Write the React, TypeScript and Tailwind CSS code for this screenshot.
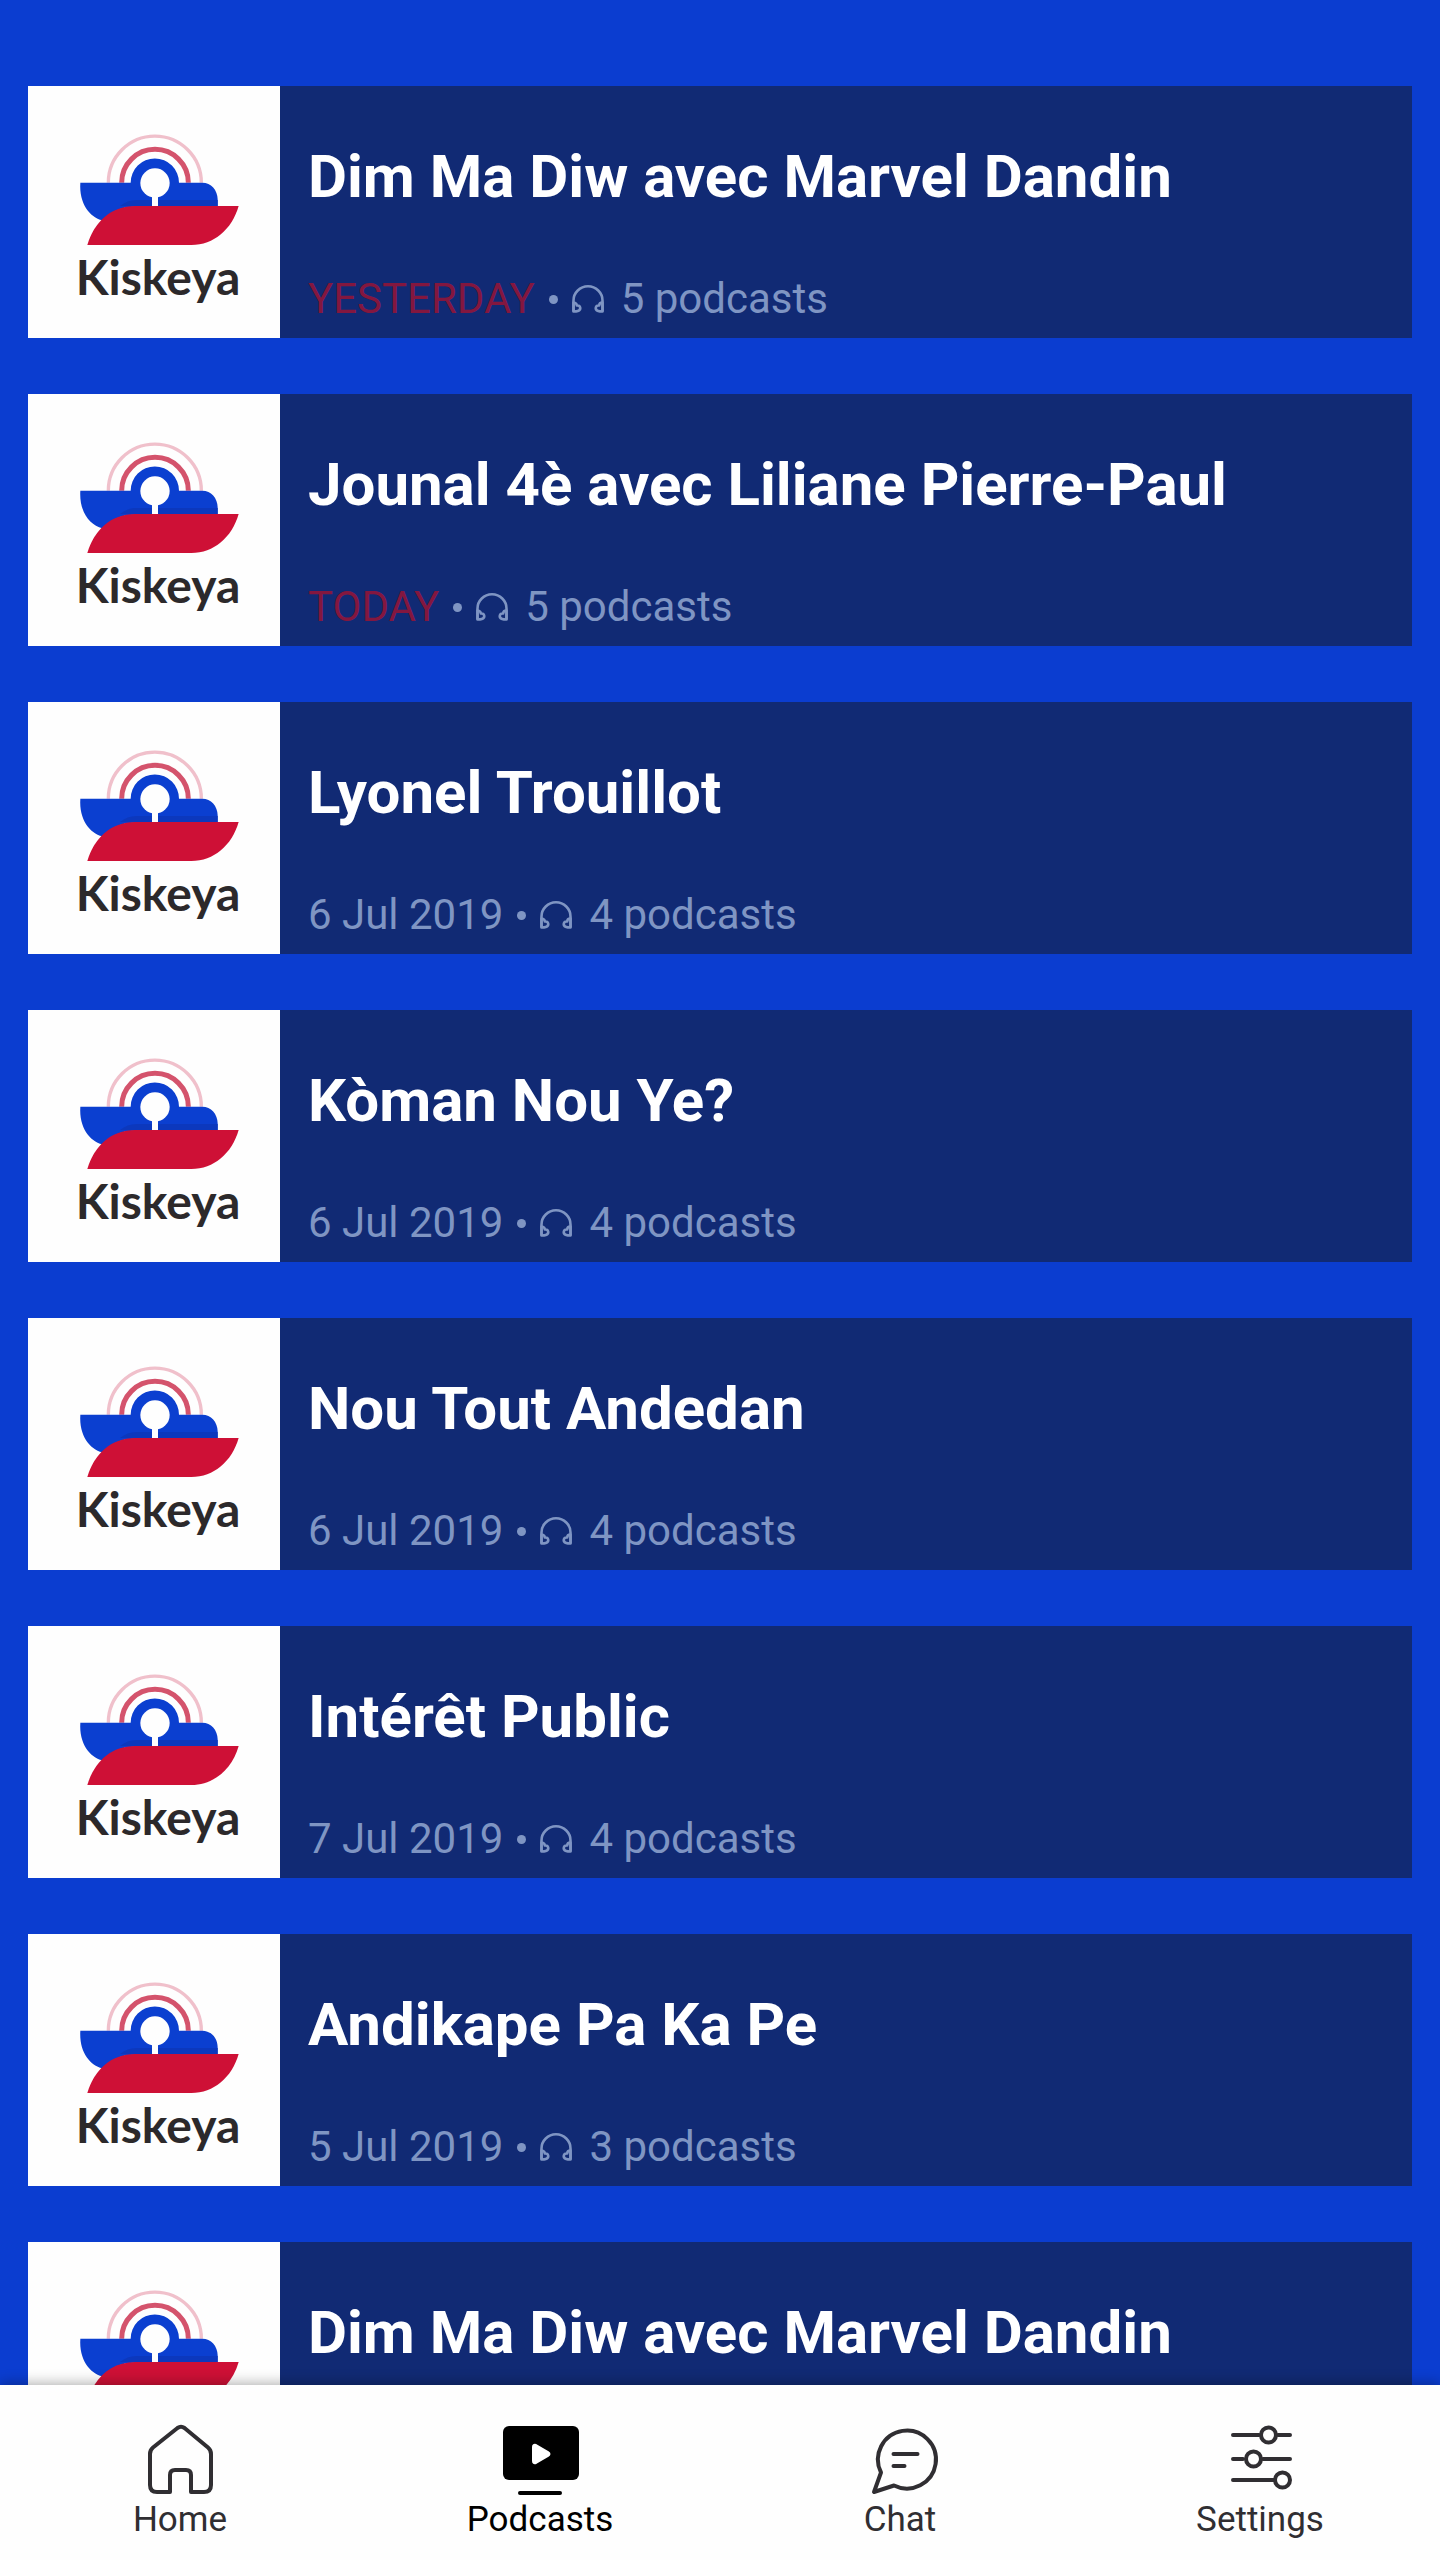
import type { ReactNode } from 'react';

type Podcast = {
  title: string;
  date?: string;
  count?: number;
  recent?: boolean;
};

const PODCASTS: Podcast[] = [
  { title: 'Dim Ma Diw avec Marvel Dandin', date: 'YESTERDAY', count: 5, recent: true },
  { title: 'Jounal 4è avec Liliane Pierre-Paul', date: 'TODAY', count: 5, recent: true },
  { title: 'Lyonel Trouillot', date: '6 Jul 2019', count: 4 },
  { title: 'Kòman Nou Ye?', date: '6 Jul 2019', count: 4 },
  { title: 'Nou Tout Andedan', date: '6 Jul 2019', count: 4 },
  { title: 'Intérêt Public', date: '7 Jul 2019', count: 4 },
  { title: 'Andikape Pa Ka Pe', date: '5 Jul 2019', count: 3 },
  { title: 'Dim Ma Diw avec Marvel Dandin' },
];

function KiskeyaLogo() {
  return (
    <div className="relative size-[252px] shrink-0 bg-[#fefefe]">
      <svg viewBox="24 18 756 756" className="size-full" fill="none" aria-hidden="true">
        <path d="M265 308a139 139 0 0 1 279 0" stroke="#f0c0cb" strokeWidth="10" />
        <path d="M305 308a99 99 0 0 1 200 0" stroke="#d4536c" strokeWidth="15" />
        <path
          d="M182 308h150a72 72 0 0 1 145 0h70c26 0 46 22 46 50v22H345c-42 0-70 14-98 41-38-10-70-50-66-113Z"
          fill="#0b3fd0"
        />
        <path d="M300 378c15-12 30-18 50-18h243v18Z" fill="#0c38bd" />
        <circle cx="405" cy="309" r="44" fill="#fefefe" />
        <path d="M396 340h18v40h-18z" fill="#fefefe" />
        <path d="M202 495c20-68 70-117 143-117h311c-20 70-75 117-142 117Z" fill="#ce1036" />
      </svg>
      <span className="absolute inset-x-0 top-[163px] pl-2 text-center font-['Lato'] text-[48px] leading-[56px] font-bold text-[#2c292b]">
        Kiskeya
      </span>
    </div>
  );
}

function HeadphonesIcon() {
  return (
    <svg viewBox="0 0 32 28" className="h-7 w-8" fill="none" stroke="currentColor" strokeWidth="2.600" strokeLinejoin="round" aria-hidden="true">
      <path d="M1.500 26.500V15.500a14.500 14.200 0 0 1 29 0v11" />
      <path d="M1.500 26.500V17.500c2.500 0 3.300 1.800 3.300 3 3.700-.5 5 4 1 5.500q-1.300.5-4.300.5Z" />
      <path d="M30.500 26.500V17.500c-2.500 0-3.300 1.800-3.300 3-3.700-.5-5 4-1 5.500q1.300.5 4.300.5Z" />
    </svg>
  );
}

function PodcastCard({ title, date, count, recent }: Podcast) {
  return (
    <li>
      <a href="#" className="flex bg-[#112a74]">
        <KiskeyaLogo />
        <div className="flex min-w-0 flex-1 flex-col justify-between pt-[53px] pb-3.5 pl-7">
          <h2 className="truncate text-[60px] leading-[76px] font-bold text-white">{title}</h2>
          {date && (
            <p className="flex items-center text-[42px] leading-[50px] text-[#7f95c3]">
              <span className={recent ? 'text-[#83173f]' : ''}>{date}</span>
              <span className="mx-3.5 size-[9px] rounded-full bg-current" />
              <HeadphonesIcon />
              <span className="ml-[17px]">{count} podcasts</span>
            </p>
          )}
        </div>
      </a>
    </li>
  );
}

function HomeIcon() {
  return (
    <svg viewBox="0 0 80 72" className="h-[72px] w-20" fill="none" stroke="currentColor" strokeWidth="4" strokeLinejoin="round" strokeLinecap="round" aria-hidden="true">
      <path d="M30 69V52q0-5 5-5h11q5 0 5 5v17h13q7 0 7-7V31q0-4-3-6.500L44.500 5Q41 2.500 37.500 5L13 24.500q-3 2.500-3 6.500v31q0 7 7 7h13Z" />
    </svg>
  );
}

function PodcastsIcon() {
  return (
    <svg viewBox="0 0 80 72" className="h-[72px] w-20" aria-hidden="true">
      <rect x="3" y="3" width="76" height="54" rx="6" fill="currentColor" />
      <rect x="18" y="68" width="44" height="4" rx="2" fill="currentColor" />
      <path d="M33 24v14q0 3 3 2l12-7q3-2 0-4l-12-7q-3-1-3 2Z" fill="#fff" stroke="#fff" strokeWidth="2" strokeLinejoin="round" />
    </svg>
  );
}

function ChatIcon() {
  return (
    <svg viewBox="0 0 80 72" className="h-[72px] w-20" fill="none" stroke="currentColor" strokeWidth="4" strokeLinejoin="round" strokeLinecap="round" aria-hidden="true">
      <path d="M34 62.500a29 29 0 1 0-13-13L14 69Z" />
      <path d="M33.500 31h24M33.500 43h11" />
    </svg>
  );
}

function SettingsIcon() {
  return (
    <svg viewBox="0 0 80 72" className="h-[72px] w-20" fill="none" stroke="currentColor" strokeWidth="4" strokeLinecap="round" aria-hidden="true">
      <path d="M13 12h26M58 12h12M13 36h10M43 36h27M13 57h42" />
      <circle cx="48.500" cy="12" r="7.500" />
      <circle cx="33.500" cy="36" r="7.500" />
      <circle cx="62.500" cy="57" r="7.500" />
    </svg>
  );
}

const TABS: { label: string; icon: ReactNode; active?: boolean }[] = [
  { label: 'Home', icon: <HomeIcon /> },
  { label: 'Podcasts', icon: <PodcastsIcon />, active: true },
  { label: 'Chat', icon: <ChatIcon /> },
  { label: 'Settings', icon: <SettingsIcon /> },
];

export default function App() {
  return (
    <div className="flex h-screen flex-col bg-[#0b3dd0] font-['Roboto',sans-serif]">
      <main className="min-h-0 flex-1 overflow-y-auto px-7 pt-[86px] [scrollbar-width:none]">
        <ul className="flex flex-col gap-14">
          {PODCASTS.map((podcast, idx) => (
            <PodcastCard key={idx} {...podcast} />
          ))}
        </ul>
      </main>

      <nav className="relative grid grid-cols-4 bg-[#fefefe] pt-[38px] pb-[18px] shadow-[0_-2px_12px_rgba(0,0,0,0.3)]">
        {TABS.map((tab) => (
          <a
            key={tab.label}
            href="#"
            aria-current={tab.active ? 'page' : undefined}
            className={`flex flex-col items-center gap-[3px] ${tab.active ? 'text-black' : 'text-[#302e32]'}`}
          >
            {tab.icon}
            <span className="text-[35px] leading-[44px]">{tab.label}</span>
          </a>
        ))}
      </nav>
    </div>
  );
}
